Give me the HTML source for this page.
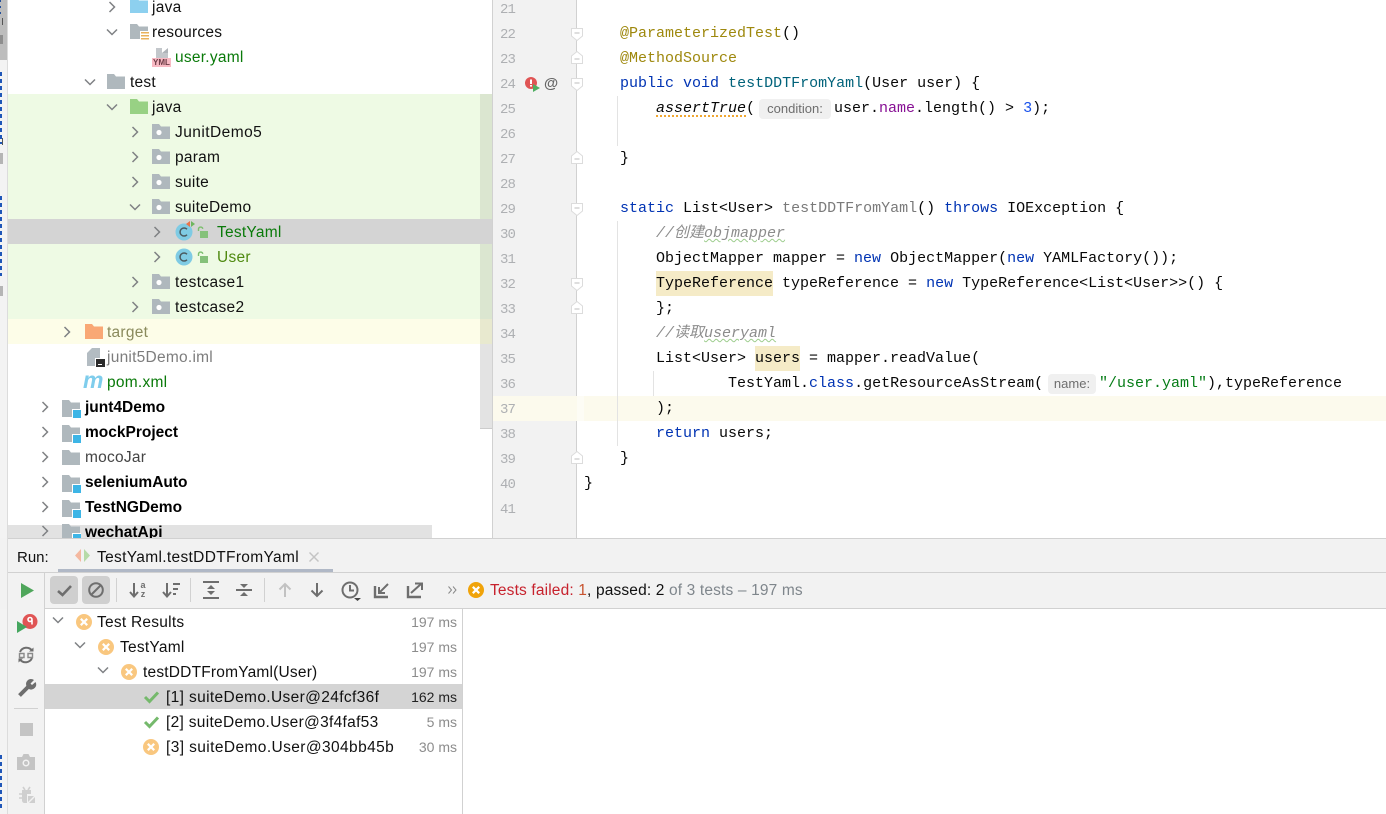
<!DOCTYPE html>
<html><head><meta charset="utf-8"><style>
html,body{margin:0;padding:0;width:1386px;height:814px;overflow:hidden;background:#fff}
body{position:relative;font-family:"Liberation Sans","Noto Sans CJK SC",sans-serif;font-size:15.5px;letter-spacing:.25px;color:#000}
.a{position:absolute}
.t{position:absolute;white-space:pre;line-height:25px;height:25px;color:#111;margin-top:1px}
.c{position:absolute;white-space:pre;line-height:25px;height:25px;font-family:"Liberation Mono","Noto Sans CJK SC",monospace;font-size:15px;letter-spacing:0;color:#080808;left:584px}
.n{position:absolute;left:500px;width:20px;line-height:25px;font-family:"Liberation Mono",monospace;font-size:14px;letter-spacing:-.9px;color:#aeb0b3;margin-top:2px}
.k{color:#0033b3}.an{color:#9e880d}.fn{color:#00627a}.p{color:#871094}.s{color:#067d17}.nu{color:#1750eb}.cm{color:#8c8c8c;font-style:italic}
.g{color:#0a7a0a}.b{font-weight:bold;color:#000;letter-spacing:0}
.hint{position:absolute;background:#f0f0f0;border-radius:4px;height:20px;line-height:20px;font-size:13px;letter-spacing:0;color:#6e6e6e;text-align:center}
svg{position:absolute;overflow:visible}
svg:has(>use[href="#cr"]),svg:has(>use[href="#cd"]){margin-top:1px}
.r{position:absolute;text-align:right;width:60px;left:397px;font-size:14px;letter-spacing:0;color:#8c8c8c;line-height:25px;margin-top:1px}
</style></head><body>
<svg width="0" height="0" style="position:absolute"><defs>
<symbol id="cr" viewBox="0 0 12 12" overflow="visible"><path d="M3.5 1 L8.5 6 L3.5 11" fill="none" stroke="#7f8184" stroke-width="1.5"/></symbol>
<symbol id="cd" viewBox="0 0 12 12" overflow="visible"><path d="M1 3.5 L6 8.5 L11 3.5" fill="none" stroke="#7f8184" stroke-width="1.5"/></symbol>
<symbol id="fo" viewBox="0 0 18 16" overflow="visible"><path d="M0 1H7L9 3.5H18V16H0Z"/></symbol>
<symbol id="pk" viewBox="0 0 18 16" overflow="visible"><path fill="#afb8bd" d="M0 1H7L9 3.5H18V16H0Z"/><circle cx="7" cy="9.5" r="2.6" fill="#fff"/></symbol>
<symbol id="md" viewBox="0 0 19 19" overflow="visible"><path fill="#afb8bd" d="M0 0H7L9 2.5H18V17H0Z"/><rect x="10" y="9" width="9" height="9" fill="#fff"/><rect x="11" y="10" width="8" height="8" fill="#3db5e6"/></symbol>
<symbol id="x" viewBox="0 0 16 16" overflow="visible"><circle cx="8" cy="8" r="8" fill="#f9c77f"/><path d="M4.8 4.8L11.2 11.2M11.2 4.8L4.8 11.2" stroke="#fff" stroke-width="2.2"/></symbol>
<symbol id="ok" viewBox="0 0 16 14" overflow="visible"><path d="M1 7L5.5 11.5L14 2.5" fill="none" stroke="#75b96c" stroke-width="3"/></symbol>
<symbol id="cl" viewBox="0 0 18 18" overflow="visible"><circle cx="9" cy="9" r="8.5" fill="#7fcbe4"/><path d="M12 6.3A4 4 0 1 0 12 11.7" fill="none" stroke="#4a5a60" stroke-width="1.5"/></symbol>
<symbol id="lk" viewBox="0 0 12 12" overflow="visible"><path d="M1.5 5V2.8A2.2 2.2 0 0 1 5.8 2.8" fill="none" stroke="#7cbf6e" stroke-width="1.4"/><rect x="3" y="5" width="8" height="7" fill="#85c17a"/></symbol>
<symbol id="fd" viewBox="0 0 12 13" overflow="visible"><path d="M.5.5H11.5V8L6 12.5.5 8Z" fill="#fff" stroke="#dcdcdc"/><path d="M3.5 5H8.5" stroke="#bdbdbd"/></symbol>
<symbol id="fu" viewBox="0 0 12 13" overflow="visible"><path d="M.5 12.5H11.5V5L6 .5.5 5Z" fill="#fff" stroke="#dcdcdc"/><path d="M3.5 8H8.5" stroke="#bdbdbd"/></symbol>
</defs></svg>

<!-- left strip -->
<div class="a" style="left:0;top:0;width:8px;height:814px;background:#f3f3f3;border-right:1px solid #dcdcdc;box-sizing:border-box"></div>
<div class="a" style="left:0;top:0;width:7px;height:60px;background:#bdbdbd"></div>
<div class="a" style="left:2px;top:18px;width:1px;height:7px;background:#555"></div>
<div class="a" style="left:0;top:35px;width:3px;height:9px;background:#8e8e8e"></div>
<div class="a" style="left:0;top:0;width:1px;height:16px;background:repeating-linear-gradient(#24509a 0 2px,transparent 2px 6px)"></div>
<div class="a" style="left:0;top:72px;width:1.5px;height:72px;background:repeating-linear-gradient(#1f56b8 0 4px,transparent 4px 7px)"></div>
<div class="a" style="left:2px;top:138px;width:1px;height:7px;background:#555"></div>
<div class="a" style="left:0;top:153px;width:3px;height:11px;background:#b5b5b5"></div>
<div class="a" style="left:0;top:196px;width:1.5px;height:80px;background:repeating-linear-gradient(#1f56b8 0 4px,transparent 4px 7px)"></div>
<div class="a" style="left:0;top:286px;width:3px;height:10px;background:#b5b5b5"></div>
<div class="a" style="left:0;top:755px;width:1.5px;height:55px;background:repeating-linear-gradient(#1f56b8 0 4px,transparent 4px 7px)"></div>

<!-- tree backgrounds -->
<div class="a" style="left:8px;top:94px;width:472px;height:225px;background:#eefae4"></div>
<div class="a" style="left:8px;top:319px;width:472px;height:25px;background:#fdfde8"></div>
<div class="a" style="left:480px;top:94px;width:12px;height:225px;background:#dbe6d0"></div>
<div class="a" style="left:480px;top:319px;width:12px;height:25px;background:#e8e9cf"></div>
<div class="a" style="left:480px;top:344px;width:12px;height:85px;background:#e3e3e3;border-bottom:1px solid #ccc;box-sizing:border-box"></div>
<div class="a" style="left:8px;top:219px;width:484px;height:25px;background:#d4d4d4"></div>
<div class="a" style="left:492px;top:0;width:1px;height:538px;background:#d1d1d1"></div>

<!-- tree icons -->
<svg style="left:106px;top:0" width="12" height="12"><use href="#cr"/></svg>
<svg style="left:130px;top:-3px" width="18" height="16" fill="#8dd0ef"><use href="#fo"/></svg>
<svg style="left:106px;top:25px" width="12" height="12"><use href="#cd"/></svg>
<svg style="left:130px;top:23px" width="18" height="16" fill="#afb8bd"><use href="#fo"/></svg>
<div class="a" style="left:141px;top:32px;width:8px;height:9px;background:repeating-linear-gradient(#e8b25c 0 1.5px,#fff 1.5px 3px);outline:1px solid #fff"></div>
<svg style="left:152px;top:47px" width="20" height="20"><path d="M4 1H16V11H4Z" fill="#c3c7cb"/><path d="M10 1V6H16V1Z" fill="#fff"/><path d="M10 6L16 1V6Z" fill="#aeb3b8"/></svg>
<div class="a" style="left:152px;top:58px;width:19px;height:9px;background:#f8b9c3;color:#6b3b45;font:bold 8px/9px 'Liberation Sans',sans-serif;letter-spacing:0;text-align:center">YML</div>
<svg style="left:84px;top:75px" width="12" height="12"><use href="#cd"/></svg>
<svg style="left:107px;top:73px" width="18" height="16" fill="#afb8bd"><use href="#fo"/></svg>
<svg style="left:106px;top:100px" width="12" height="12"><use href="#cd"/></svg>
<svg style="left:130px;top:98px" width="18" height="16" fill="#98d184"><use href="#fo"/></svg>
<svg style="left:129px;top:125px" width="12" height="12"><use href="#cr"/></svg>
<svg style="left:152px;top:123px" width="18" height="16"><use href="#pk"/></svg>
<svg style="left:129px;top:150px" width="12" height="12"><use href="#cr"/></svg>
<svg style="left:152px;top:148px" width="18" height="16"><use href="#pk"/></svg>
<svg style="left:129px;top:175px" width="12" height="12"><use href="#cr"/></svg>
<svg style="left:152px;top:173px" width="18" height="16"><use href="#pk"/></svg>
<svg style="left:129px;top:200px" width="12" height="12"><use href="#cd"/></svg>
<svg style="left:152px;top:198px" width="18" height="16"><use href="#pk"/></svg>
<svg style="left:151px;top:225px" width="12" height="12"><use href="#cr"/></svg>
<svg style="left:175px;top:223px" width="18" height="18"><use href="#cl"/></svg>
<svg style="left:186px;top:221px" width="9" height="8"><path d="M4 0L0 3L4 6Z" fill="#e8734a"/><path d="M5 0L9 3L5 6Z" fill="#6eb65f"/></svg>
<svg style="left:197px;top:226px" width="12" height="12"><use href="#lk"/></svg>
<svg style="left:151px;top:250px" width="12" height="12"><use href="#cr"/></svg>
<svg style="left:175px;top:248px" width="18" height="18"><use href="#cl"/></svg>
<svg style="left:197px;top:251px" width="12" height="12"><use href="#lk"/></svg>
<svg style="left:129px;top:275px" width="12" height="12"><use href="#cr"/></svg>
<svg style="left:152px;top:273px" width="18" height="16"><use href="#pk"/></svg>
<svg style="left:129px;top:300px" width="12" height="12"><use href="#cr"/></svg>
<svg style="left:152px;top:298px" width="18" height="16"><use href="#pk"/></svg>
<svg style="left:61px;top:325px" width="12" height="12"><use href="#cr"/></svg>
<svg style="left:85px;top:323px" width="18" height="16" fill="#f9a875"><use href="#fo"/></svg>
<svg style="left:87px;top:348px" width="18" height="18"><path d="M0 5L5 0H13V18H0Z" fill="#b3bcc2"/><rect x="8" y="10" width="10" height="9" fill="#fff"/><rect x="9" y="11" width="9" height="8" fill="#2b2b2b"/><rect x="11" y="16" width="4" height="1" fill="#fff"/></svg>
<div class="a" style="left:83px;top:368px;width:20px;height:25px;font:italic bold 23px/25px 'Liberation Sans',sans-serif;letter-spacing:0;color:#7fcdec">m</div>
<svg style="left:39px;top:400px" width="12" height="12"><use href="#cr"/></svg>
<svg style="left:62px;top:400px" width="19" height="19"><use href="#md"/></svg>
<svg style="left:39px;top:425px" width="12" height="12"><use href="#cr"/></svg>
<svg style="left:62px;top:425px" width="19" height="19"><use href="#md"/></svg>
<svg style="left:39px;top:450px" width="12" height="12"><use href="#cr"/></svg>
<svg style="left:62px;top:449px" width="18" height="16" fill="#afb8bd"><use href="#fo"/></svg>
<svg style="left:39px;top:475px" width="12" height="12"><use href="#cr"/></svg>
<svg style="left:62px;top:475px" width="19" height="19"><use href="#md"/></svg>
<svg style="left:39px;top:500px" width="12" height="12"><use href="#cr"/></svg>
<svg style="left:62px;top:500px" width="19" height="19"><use href="#md"/></svg>

<!-- tree text -->
<div class="t" style="left:152px;top:-6px">java</div>
<div class="t" style="left:152px;top:19px">resources</div>
<div class="t g" style="left:175px;top:44px">user.yaml</div>
<div class="t" style="left:130px;top:69px">test</div>
<div class="t" style="left:152px;top:94px">java</div>
<div class="t" style="left:175px;top:119px;letter-spacing:.45px">JunitDemo5</div>
<div class="t" style="left:175px;top:144px">param</div>
<div class="t" style="left:175px;top:169px">suite</div>
<div class="t" style="left:175px;top:194px">suiteDemo</div>
<div class="t g" style="left:217px;top:219px">TestYaml</div>
<div class="t" style="left:217px;top:244px;color:#4f8a10">User</div>
<div class="t" style="left:175px;top:269px;letter-spacing:.35px">testcase1</div>
<div class="t" style="left:175px;top:294px;letter-spacing:.35px">testcase2</div>
<div class="t" style="left:107px;top:319px;color:#8a8a5c">target</div>
<div class="t" style="left:107px;top:344px;color:#7d7d7d">junit5Demo.iml</div>
<div class="t g" style="left:107px;top:369px">pom.xml</div>
<div class="t b" style="left:85px;top:394px">junt4Demo</div>
<div class="t b" style="left:85px;top:419px">mockProject</div>
<div class="t" style="left:85px;top:444px;color:#444">mocoJar</div>
<div class="t b" style="left:85px;top:469px">seleniumAuto</div>
<div class="t b" style="left:85px;top:494px">TestNGDemo</div>

<!-- horizontal scrollbar row (clipped wechatApi) -->
<div class="a" style="left:8px;top:525px;width:424px;height:13px;background:#e2e2e2"></div>
<div class="a" style="left:0;top:519px;width:492px;height:19px;overflow:hidden">
<svg style="left:39px;top:5px" width="12" height="12"><use href="#cr"/></svg>
<svg style="left:62px;top:5px" width="19" height="19"><use href="#md"/></svg>
<div class="t b" style="left:85px;top:0">wechatApi</div>
</div>

<!-- gutter -->
<div class="a" style="left:493px;top:0;width:84px;height:538px;background:#f2f2f2;border-right:1px solid #d1d1d1;box-sizing:border-box"></div>
<div class="a" style="left:493px;top:396px;width:893px;height:25px;background:#fcfaed"></div>
<div class="a" style="left:577px;top:396px;width:7px;height:25px;background:#fff;opacity:.45"></div>

<!-- indent guides -->
<div class="a" style="left:617px;top:96px;width:1px;height:50px;background:#e3e3e3"></div>
<div class="a" style="left:617px;top:221px;width:1px;height:225px;background:#e3e3e3"></div>
<div class="a" style="left:653px;top:371px;width:1px;height:25px;background:#e3e3e3"></div>

<div class="n" style="top:-4px">21</div><div class="n" style="top:21px">22</div><div class="n" style="top:46px">23</div><div class="n" style="top:71px">24</div><div class="n" style="top:96px">25</div><div class="n" style="top:121px">26</div><div class="n" style="top:146px">27</div><div class="n" style="top:171px">28</div><div class="n" style="top:196px">29</div><div class="n" style="top:221px">30</div><div class="n" style="top:246px">31</div><div class="n" style="top:271px">32</div><div class="n" style="top:296px">33</div><div class="n" style="top:321px">34</div><div class="n" style="top:346px">35</div><div class="n" style="top:371px">36</div><div class="n" style="top:396px">37</div><div class="n" style="top:421px">38</div><div class="n" style="top:446px">39</div><div class="n" style="top:471px">40</div><div class="n" style="top:496px">41</div>

<!-- fold marks -->
<svg style="left:571px;top:28px" width="12" height="13"><use href="#fd"/></svg>
<svg style="left:571px;top:51px" width="12" height="13"><use href="#fu"/></svg>
<svg style="left:571px;top:78px" width="12" height="13"><use href="#fd"/></svg>
<svg style="left:571px;top:151px" width="12" height="13"><use href="#fu"/></svg>
<svg style="left:571px;top:203px" width="12" height="13"><use href="#fd"/></svg>
<svg style="left:571px;top:278px" width="12" height="13"><use href="#fd"/></svg>
<svg style="left:571px;top:301px" width="12" height="13"><use href="#fu"/></svg>
<svg style="left:571px;top:451px" width="12" height="13"><use href="#fu"/></svg>

<!-- gutter icons line 24 -->
<svg style="left:525px;top:77px" width="15" height="15"><circle cx="6" cy="6" r="6" fill="#e05555"/><rect x="5" y="2.5" width="2" height="4.5" fill="#fff"/><rect x="5" y="8" width="2" height="1.6" fill="#fff"/><path d="M8 7L15 11L8 15Z" fill="#4fae62"/></svg>
<div class="a" style="left:544px;top:72px;width:16px;font:bold 14.5px/25px 'Liberation Sans',sans-serif;letter-spacing:0;color:#666">@</div>

<!-- highlights -->
<div class="a" style="left:656px;top:271px;width:117px;height:25px;background:#f5ebc7"></div>
<div class="a" style="left:755px;top:346px;width:45px;height:25px;background:#f5ebc7"></div>
<div class="a" style="left:656px;top:115px;width:90px;height:0;border-bottom:2px dotted #f0a732"></div>

<!-- code -->
<div class="c" style="top:21px">    <span class="an">@ParameterizedTest</span>()</div>
<div class="c" style="top:46px">    <span class="an">@MethodSource</span></div>
<div class="c" style="top:71px">    <span class="k">public void</span> <span class="fn">testDDTFromYaml</span>(User user) {</div>
<div class="c" style="top:96px">        <i>assertTrue</i>(</div>
<div class="hint" style="left:759px;top:99px;width:72px">condition:</div>
<div class="c" style="top:96px;left:834px">user.<span class="p">name</span>.length() &gt; <span class="nu">3</span>);</div>
<div class="c" style="top:146px">    }</div>
<div class="c" style="top:196px">    <span class="k">static</span> List&lt;User&gt; <span style="color:#7a7a7a">testDDTFromYaml</span>() <span class="k">throws</span> IOException {</div>
<div class="c" style="top:221px">        <span class="cm">//创建<span style="text-decoration:underline wavy #9ccc8c 1px">objmapper</span></span></div>
<div class="c" style="top:246px">        ObjectMapper mapper = <span class="k">new</span> ObjectMapper(<span class="k">new</span> YAMLFactory());</div>
<div class="c" style="top:271px">        TypeReference typeReference = <span class="k">new</span> TypeReference&lt;List&lt;User&gt;&gt;() {</div>
<div class="c" style="top:296px">        };</div>
<div class="c" style="top:321px">        <span class="cm">//读取<span style="text-decoration:underline wavy #9ccc8c 1px">useryaml</span></span></div>
<div class="c" style="top:346px">        List&lt;User&gt; users = mapper.readValue(</div>
<div class="c" style="top:371px">                TestYaml.<span class="k">class</span>.getResourceAsStream(</div>
<div class="hint" style="left:1048px;top:374px;width:48px">name:</div>
<div class="c" style="top:371px;left:1099px"><span class="s">"/user.yaml"</span>),typeReference</div>
<div class="c" style="top:396px">        );</div>
<div class="c" style="top:421px">        <span class="k">return</span> users;</div>
<div class="c" style="top:446px">    }</div>
<div class="c" style="top:471px">}</div>

<!-- run panel -->
<div class="a" style="left:0;top:538px;width:1386px;height:71px;background:#f2f2f2"></div>
<div class="a" style="left:7px;top:538px;width:1px;height:276px;background:#dcdcdc"></div>
<div class="a" style="left:8px;top:538px;width:1378px;height:1px;background:#d1d1d1"></div>
<div class="a" style="left:8px;top:572px;width:1378px;height:1px;background:#d1d1d1"></div>
<div class="a" style="left:45px;top:608px;width:1341px;height:1px;background:#d1d1d1"></div>
<div class="a" style="left:8px;top:573px;width:36px;height:241px;background:#f2f2f2;border-right:1px solid #d1d1d1"></div>
<div class="a" style="left:462px;top:609px;width:1px;height:205px;background:#d1d1d1"></div>
<div class="a" style="left:58px;top:569px;width:275px;height:3px;background:#b0b8c6"></div>
<div class="t" style="left:17px;top:544px;letter-spacing:0;font-size:15px">Run:</div>
<svg style="left:75px;top:549px" width="15" height="13"><path d="M6 0L0 6.5L6 13Z" fill="#f4b8a0"/><path d="M9 0L15 6.5L9 13Z" fill="#b6dba8"/></svg>
<div class="t" style="left:97px;top:544px;letter-spacing:.33px">TestYaml.testDDTFromYaml</div>
<svg style="left:309px;top:552px" width="10" height="10"><path d="M.5.5L9.5 9.5M9.5.5L.5 9.5" stroke="#c4c4c4" stroke-width="1.5"/></svg>

<!-- toolbar -->
<svg style="left:21px;top:583px" width="13" height="15"><path d="M0 0L13 7.5L0 15Z" fill="#4fa65b"/></svg>
<div class="a" style="left:50px;top:576px;width:28px;height:28px;background:#cfcfcf;border-radius:4px"></div>
<div class="a" style="left:82px;top:576px;width:28px;height:28px;background:#cfcfcf;border-radius:4px"></div>
<svg style="left:57px;top:584px" width="15" height="13"><path d="M1 7L5.5 11L14 2" fill="none" stroke="#6e6e6e" stroke-width="2.6"/></svg>
<svg style="left:88px;top:582px" width="16" height="16"><circle cx="8" cy="8" r="6.8" fill="none" stroke="#6e6e6e" stroke-width="2"/><path d="M3.5 12.5L12.5 3.5" stroke="#6e6e6e" stroke-width="2"/></svg>
<div class="a" style="left:116px;top:578px;width:1px;height:24px;background:#d1d1d1"></div>
<svg style="left:129px;top:581px" width="17" height="18"><path d="M5 2V15M1 11L5 15.5L9 11" fill="none" stroke="#6e6e6e" stroke-width="2"/></svg>
<div class="a" style="left:139px;top:581px;font:bold 9px/9px 'Liberation Sans',sans-serif;letter-spacing:0;color:#6e6e6e;text-align:center;width:8px">a<br>z</div>
<svg style="left:162px;top:581px" width="18" height="18"><path d="M5 2V15M1 11L5 15.5L9 11" fill="none" stroke="#6e6e6e" stroke-width="2"/><path d="M11 3H18M11 8H16M11 13H14" stroke="#6e6e6e" stroke-width="2"/></svg>
<div class="a" style="left:190px;top:578px;width:1px;height:24px;background:#d1d1d1"></div>
<svg style="left:203px;top:581px" width="16" height="18"><path d="M0 1H16M0 17H16" stroke="#6e6e6e" stroke-width="2"/><path d="M8 4L12 8H4ZM8 14L12 10H4Z" fill="#6e6e6e"/></svg>
<svg style="left:236px;top:581px" width="16" height="18"><path d="M0 9H16" stroke="#6e6e6e" stroke-width="2"/><path d="M8 7L12 3H4ZM8 11L12 15H4Z" fill="#6e6e6e"/></svg>
<div class="a" style="left:264px;top:578px;width:1px;height:24px;background:#d1d1d1"></div>
<svg style="left:278px;top:582px" width="14" height="16"><path d="M7 15V2M1.5 7.5L7 2L12.5 7.5" fill="none" stroke="#c2c2c2" stroke-width="2"/></svg>
<svg style="left:310px;top:582px" width="14" height="16"><path d="M7 1V14M1.5 8.5L7 14L12.5 8.5" fill="none" stroke="#6e6e6e" stroke-width="2"/></svg>
<svg style="left:341px;top:581px" width="20" height="20"><circle cx="9" cy="9" r="7.5" fill="none" stroke="#6e6e6e" stroke-width="2"/><path d="M9 4V9.5H13" fill="none" stroke="#6e6e6e" stroke-width="2"/><path d="M13 17H20L16.5 20Z" fill="#444"/></svg>
<svg style="left:374px;top:582px" width="16" height="16"><path d="M1 4V15H14" fill="none" stroke="#6e6e6e" stroke-width="2.4"/><path d="M14 2L5 11M5 5V11H11" fill="none" stroke="#6e6e6e" stroke-width="2"/></svg>
<svg style="left:407px;top:582px" width="16" height="16"><path d="M1 4V15H14" fill="none" stroke="#6e6e6e" stroke-width="2.4"/><path d="M4 11L14 2M8 1.5H15V8" fill="none" stroke="#6e6e6e" stroke-width="2"/></svg>
<svg style="left:448px;top:586px" width="9" height="8"><path d="M.5.5L3.5 4L.5 7.5M5 .5L8 4L5 7.5" fill="none" stroke="#888"/></svg>
<svg style="left:468px;top:582px" width="16" height="16"><circle cx="8" cy="8" r="8" fill="#f0a30a"/><path d="M4.8 4.8L11.2 11.2M11.2 4.8L4.8 11.2" stroke="#fff" stroke-width="2.2"/></svg>
<div class="t" style="left:490px;top:577px;color:#c7222d;letter-spacing:.15px">Tests failed: <span style="color:#c7522d">1</span><span style="color:#111">, passed: 2</span> <span style="color:#7f868c">of 3 tests – 197 ms</span></div>

<!-- side toolbar -->
<svg style="left:17px;top:614px" width="20" height="19"><circle cx="13" cy="7.5" r="7.5" fill="#e05555"/><circle cx="13" cy="5.5" r="2" fill="none" stroke="#fff" stroke-width="1.6"/><path d="M15 6V10.5" stroke="#fff" stroke-width="1.6"/><path d="M0 7L10 13L0 19Z" fill="#45a65f"/></svg>
<svg style="left:18px;top:646px" width="16" height="18"><path d="M2 6A7 7 0 0 1 14 4.5M14 12A7 7 0 0 1 2 13.5" fill="none" stroke="#6e6e6e" stroke-width="2"/><path d="M11 5.5H15.5V1.5ZM5 12.5H.5V16.5Z" fill="#6e6e6e"/><path d="M1.5 7.5H6V11.5H1.5ZM10 7.5H14.5V11.5H10Z" fill="none" stroke="#8a8a8a" stroke-width="1.4"/></svg>
<svg style="left:18px;top:679px" width="18" height="18"><path d="M1.5 16.5L10 8" stroke="#6e6e6e" stroke-width="4"/><path d="M9 8A5 5 0 0 1 16 1L12.5 4.5L14 6L17.5 3A5 5 0 0 1 11 10Z" fill="#6e6e6e"/></svg>
<div class="a" style="left:14px;top:708px;width:24px;height:1px;background:#d1d1d1"></div>
<div class="a" style="left:20px;top:723px;width:13px;height:13px;background:#c4c4c4"></div>
<svg style="left:17px;top:754px" width="18" height="16"><path d="M0 3H5L6.5 0H11.5L13 3H18V16H0Z" fill="#c4c4c4"/><circle cx="9" cy="9" r="3.5" fill="#f2f2f2"/><circle cx="9" cy="9" r="2" fill="#c4c4c4"/></svg>
<svg style="left:18px;top:785px" width="18" height="19"><path d="M5 2L7 5M12 2L10 5M1 9H4M1 13H4" stroke="#cfcfcf" stroke-width="1.6"/><path d="M4 5H13V9H9V18H6A3 3 0 0 1 4 16Z" fill="#cfcfcf"/><path d="M10 11H16L10 17ZM17 12V18H11Z" fill="#cfcfcf"/></svg>

<!-- test tree -->
<div class="a" style="left:45px;top:684px;width:417px;height:25px;background:#d4d4d4"></div>
<svg style="left:52px;top:613px" width="12" height="12"><use href="#cd"/></svg>
<svg style="left:76px;top:614px" width="16" height="16"><use href="#x"/></svg>
<svg style="left:74px;top:638px" width="12" height="12"><use href="#cd"/></svg>
<svg style="left:98px;top:639px" width="16" height="16"><use href="#x"/></svg>
<svg style="left:97px;top:663px" width="12" height="12"><use href="#cd"/></svg>
<svg style="left:121px;top:664px" width="16" height="16"><use href="#x"/></svg>
<svg style="left:144px;top:690px" width="16" height="14"><use href="#ok"/></svg>
<svg style="left:144px;top:715px" width="16" height="14"><use href="#ok"/></svg>
<svg style="left:143px;top:739px" width="16" height="16"><use href="#x"/></svg>
<div class="t" style="left:97px;top:609px">Test Results</div>
<div class="t" style="left:120px;top:634px">TestYaml</div>
<div class="t" style="left:143px;top:659px;letter-spacing:.2px">testDDTFromYaml(User)</div>
<div class="t" style="left:166px;top:684px;letter-spacing:.36px">[1] suiteDemo.User@24fcf36f</div>
<div class="t" style="left:166px;top:709px;letter-spacing:.3px">[2] suiteDemo.User@3f4faf53</div>
<div class="t" style="left:166px;top:734px;letter-spacing:.4px">[3] suiteDemo.User@304bb45b</div>
<div class="r" style="top:609px">197 ms</div>
<div class="r" style="top:634px">197 ms</div>
<div class="r" style="top:659px">197 ms</div>
<div class="r" style="top:684px;color:#222">162 ms</div>
<div class="r" style="top:709px">5 ms</div>
<div class="r" style="top:734px">30 ms</div>
</body></html>
